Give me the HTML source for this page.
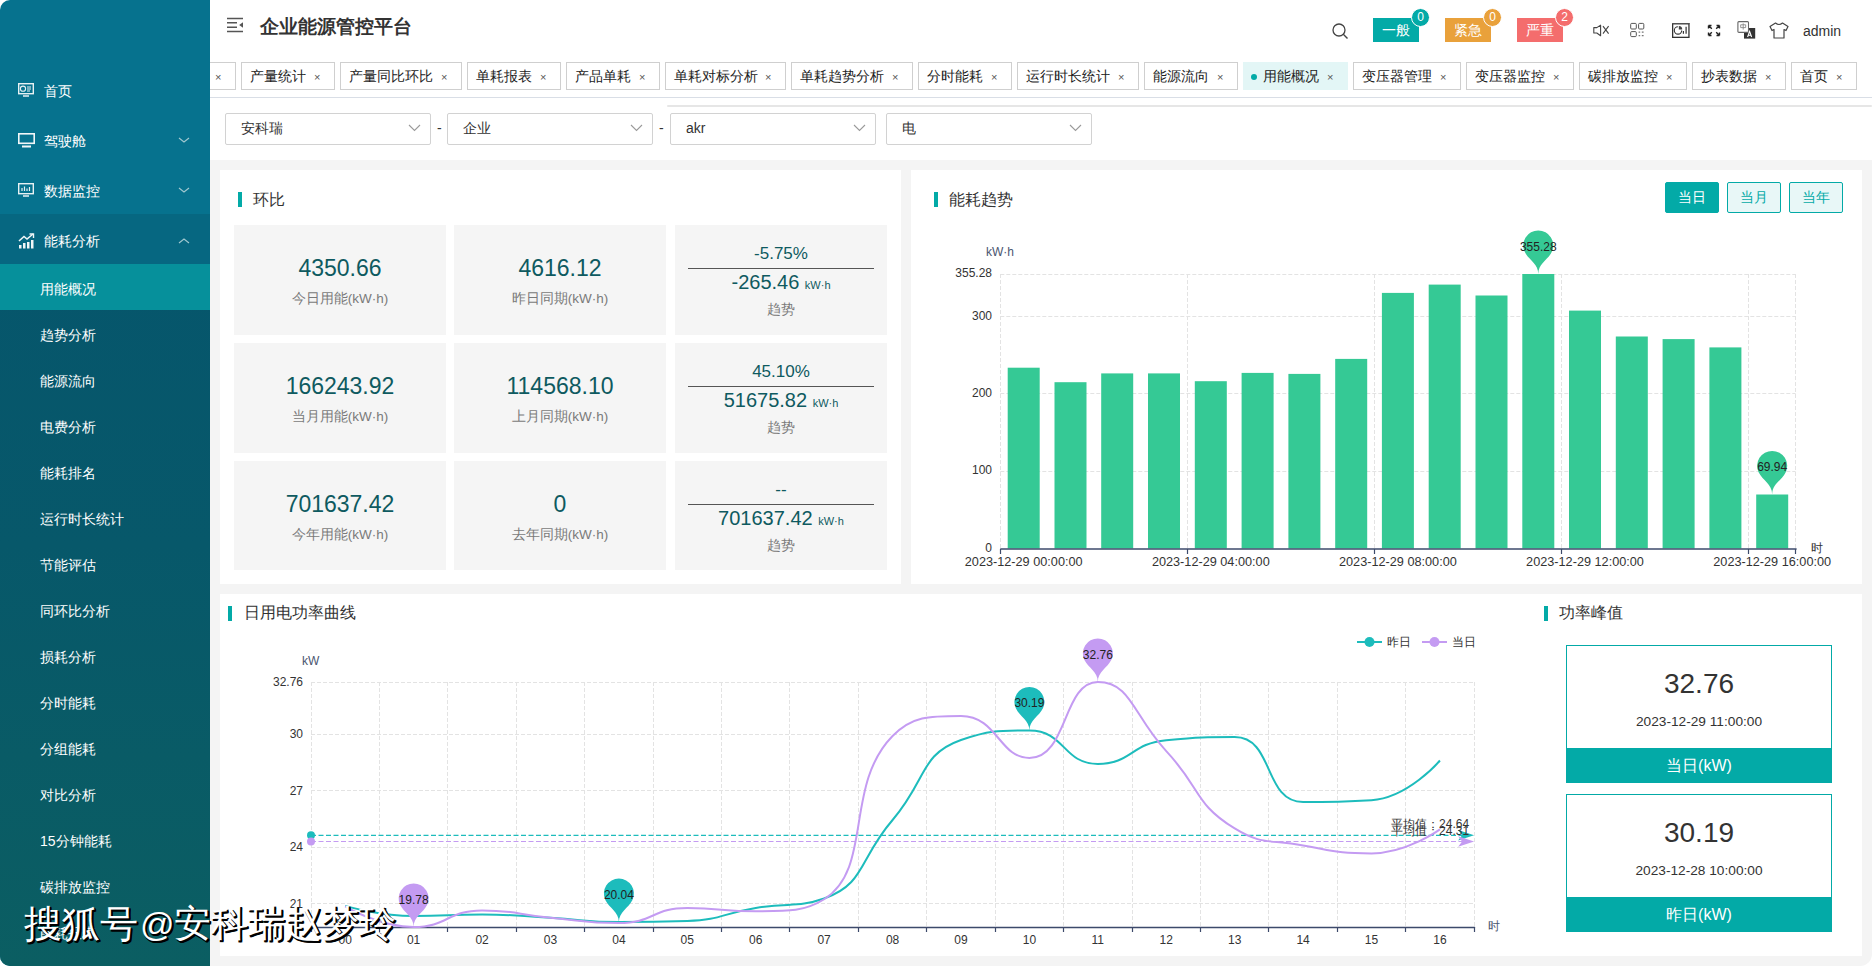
<!DOCTYPE html><html><head><meta charset="utf-8"><title>企业能源管控平台</title><style>
*{margin:0;padding:0;box-sizing:border-box}
html,body{width:1872px;height:966px;overflow:hidden;background:#fff;font-family:"Liberation Sans", sans-serif;color:#333}
.abs{position:absolute}
#side{position:absolute;left:0;top:0;width:210px;height:966px;background:#06728e;border-top-left-radius:10px;border-bottom-left-radius:10px;overflow:hidden}
.mi{position:absolute;left:0;width:210px;height:50px;color:#fff;font-size:14px;line-height:50px}
.mi .t{position:absolute;left:44px;top:2px}
.sub{position:absolute;left:0;top:264px;width:210px;height:702px;background:linear-gradient(180deg,#06566c 0%,#07586a 40%,#0b5e62 100%)}
.si{position:absolute;left:0;width:210px;height:46px;line-height:46px;color:#fff;font-size:14px}
.si .t{position:absolute;left:40px;top:2px}
#main{position:absolute;left:210px;top:0;width:1662px;height:966px;background:#f4f4f4;border-top-right-radius:10px;border-bottom-right-radius:10px;overflow:hidden}
.tab{position:absolute;top:62px;height:28px;border:1px solid #cfcfcf;background:#fff;font-size:14px;line-height:26px;color:#222;white-space:nowrap}
.tab .x{position:absolute;top:1px;font-size:11px;color:#555}
.sel{position:absolute;top:113px;height:32px;width:206px;border:1px solid #d2d2d2;border-radius:2px;background:#fff;font-size:14px;line-height:29px;color:#333}
.card{position:absolute;background:#fff}
.ct{position:absolute;font-size:16px;color:#333;line-height:20px;white-space:nowrap}
.bar4{position:absolute;width:4px;height:15px;background:#03aaa7}
.box{position:absolute;width:212px;height:109px;background:#f5f5f5;text-align:center}
.num{position:absolute;left:0;width:100%;font-size:23px;color:#0e5a60;line-height:28px;white-space:nowrap}
.lbl{position:absolute;left:0;width:100%;font-size:13.5px;color:#7a7a7a;line-height:18px;white-space:nowrap}
</style></head><body>
<div id="side">
<div class="abs" style="left:0;top:214px;width:210px;height:50px;background:#066781"></div>
<div class="sub"></div>
<div class="abs" style="left:0;top:264px;width:210px;height:46px;background:#06909b"></div>
<div class="mi" style="top:64px"><span class="t">首页</span>
</div>
<div class="mi" style="top:114px"><span class="t">驾驶舱</span>
<svg class="abs" style="left:178px;top:23px" width="12" height="7" viewBox="0 0 12 7"><path d="M1 1 L6 5 L11 1" fill="none" stroke="#9fc7cf" stroke-width="1.2"/></svg>
</div>
<div class="mi" style="top:164px"><span class="t">数据监控</span>
<svg class="abs" style="left:178px;top:23px" width="12" height="7" viewBox="0 0 12 7"><path d="M1 1 L6 5 L11 1" fill="none" stroke="#9fc7cf" stroke-width="1.2"/></svg>
</div>
<div class="mi" style="top:214px"><span class="t">能耗分析</span>
<svg class="abs" style="left:178px;top:24px" width="12" height="7" viewBox="0 0 12 7"><path d="M1 5 L6 1 L11 5" fill="none" stroke="#9fc7cf" stroke-width="1.2"/></svg>
</div>
<svg class="abs" style="left:18px;top:83px" width="16" height="15" viewBox="0 0 16 15"><rect x="0.7" y="0.7" width="14.6" height="10" fill="none" stroke="#e8f1f3" stroke-width="1.4"/><circle cx="5" cy="5.7" r="2.6" fill="none" stroke="#e8f1f3" stroke-width="1.1"/><path d="M9 4h4M9 6h4M9 8h3" stroke="#e8f1f3" stroke-width="1.1"/><path d="M5 13h6" stroke="#e8f1f3" stroke-width="1.6"/></svg>
<svg class="abs" style="left:18px;top:133px" width="17" height="15" viewBox="0 0 17 15"><rect x="0.8" y="0.8" width="15.4" height="9.5" fill="none" stroke="#f2f7f8" stroke-width="1.6"/><path d="M4 13.5h9" stroke="#f2f7f8" stroke-width="1.8"/></svg>
<svg class="abs" style="left:18px;top:183px" width="16" height="15" viewBox="0 0 16 15"><rect x="0.7" y="0.7" width="14.6" height="10" fill="none" stroke="#e8f1f3" stroke-width="1.4"/><path d="M4 8V5M6.5 8V3.5M9 8V5.5M11.5 8V4" stroke="#e8f1f3" stroke-width="1.2"/><path d="M5 13h6" stroke="#e8f1f3" stroke-width="1.6"/></svg>
<svg class="abs" style="left:18px;top:233px" width="17" height="16" viewBox="0 0 17 16"><path d="M1 8 L6 3.5 L9 6 L15 1" fill="none" stroke="#f0f6f7" stroke-width="1.6"/><path d="M11.5 1h4v4" fill="none" stroke="#f0f6f7" stroke-width="1.4"/><rect x="1" y="12" width="2.5" height="3.5" fill="#f0f6f7"/><rect x="5" y="10" width="2.5" height="5.5" fill="#f0f6f7"/><rect x="9" y="9" width="2.5" height="6.5" fill="#f0f6f7"/><rect x="13" y="7" width="2.5" height="8.5" fill="#f0f6f7"/></svg>
<div class="si" style="top:264px"><span class="t">用能概况</span></div>
<div class="si" style="top:310px"><span class="t">趋势分析</span></div>
<div class="si" style="top:356px"><span class="t">能源流向</span></div>
<div class="si" style="top:402px"><span class="t">电费分析</span></div>
<div class="si" style="top:448px"><span class="t">能耗排名</span></div>
<div class="si" style="top:494px"><span class="t">运行时长统计</span></div>
<div class="si" style="top:540px"><span class="t">节能评估</span></div>
<div class="si" style="top:586px"><span class="t">同环比分析</span></div>
<div class="si" style="top:632px"><span class="t">损耗分析</span></div>
<div class="si" style="top:678px"><span class="t">分时能耗</span></div>
<div class="si" style="top:724px"><span class="t">分组能耗</span></div>
<div class="si" style="top:770px"><span class="t">对比分析</span></div>
<div class="si" style="top:816px"><span class="t">15分钟能耗</span></div>
<div class="si" style="top:862px"><span class="t">碳排放监控</span></div>
<div class="si" style="top:908px"><span class="t">能耗报表</span></div>
</div>
<div class="abs" style="left:210px;top:100px;width:1662px;height:866px;background:#f4f4f4;border-bottom-right-radius:12px"></div>
<div class="abs" style="left:210px;top:0;width:1662px;height:160px;background:#fff;border-top-right-radius:10px"></div>
<svg class="abs" style="left:226px;top:17px" width="18" height="16" viewBox="0 0 18 16"><path d="M1 1.5h16M1 5.8h10M1 10.2h10M1 14.5h16" stroke="#555" stroke-width="1.4"/><path d="M17 5.2 L13.2 8 L17 10.8Z" fill="#555"/></svg>
<div class="abs" style="left:260px;top:15px;font-size:18.5px;font-weight:bold;color:#333;line-height:24px;letter-spacing:0;white-space:nowrap">企业能源管控平台</div>
<svg class="abs" style="left:1332px;top:23px" width="17" height="17" viewBox="0 0 17 17"><circle cx="7" cy="7" r="6" fill="none" stroke="#444" stroke-width="1.3"/><path d="M11.3 11.3 L15.5 15.5" stroke="#444" stroke-width="1.4"/></svg>
<div class="abs" style="left:1373px;top:18px;width:46px;height:24px;background:#03aaa7;color:#fff;font-size:14px;line-height:25px;text-align:center">一般</div>
<div class="abs" style="left:1411px;top:8px;width:19px;height:19px;border-radius:50%;background:#03aaa7;border:1.2px solid #fff;color:#fff;font-size:12px;line-height:17px;text-align:center">0</div>
<div class="abs" style="left:1445px;top:18px;width:46px;height:24px;background:#e9a13b;color:#fff;font-size:14px;line-height:25px;text-align:center">紧急</div>
<div class="abs" style="left:1483px;top:8px;width:19px;height:19px;border-radius:50%;background:#e9a13b;border:1.2px solid #fff;color:#fff;font-size:12px;line-height:17px;text-align:center">0</div>
<div class="abs" style="left:1517px;top:18px;width:46px;height:24px;background:#f46d6d;color:#fff;font-size:14px;line-height:25px;text-align:center">严重</div>
<div class="abs" style="left:1555px;top:8px;width:19px;height:19px;border-radius:50%;background:#f46d6d;border:1.2px solid #fff;color:#fff;font-size:12px;line-height:17px;text-align:center">2</div>
<svg class="abs" style="left:1592px;top:24px" width="18" height="13" viewBox="0 0 18 13"><path d="M1.8 3.6h3L8.6 1.2v10.6L4.8 9H1.8Z" fill="none" stroke="#444" stroke-width="1.1" stroke-linejoin="round"/><path d="M11 2.2L16.6 9.6M16.6 2.2L11 9.6" stroke="#444" stroke-width="1.1"/></svg>
<svg class="abs" style="left:1629px;top:22px" width="16" height="16" viewBox="0 0 16 16"><rect x="1.7" y="1.4" width="5.6" height="5.6" rx="1" fill="none" stroke="#555" stroke-width="1"/><rect x="9.6" y="1.4" width="5.2" height="5.6" rx="1" fill="none" stroke="#555" stroke-width="1"/><rect x="1.7" y="9.6" width="5.6" height="5" rx="1" fill="none" stroke="#555" stroke-width="1"/><path d="M9.6 10.2h1.6M12.8 10.2h1.8M9.6 13.6h1.6M12.8 13.6h1.8" stroke="#777" stroke-width="1.3"/></svg>
<svg class="abs" style="left:1671px;top:22px" width="19" height="16" viewBox="0 0 19 16"><rect x="1.65" y="1.75" width="16.3" height="13.6" fill="none" stroke="#333" stroke-width="1.3"/><path d="M1 1.6h17.6" stroke="#555" stroke-width="1"/><path d="M6.9 4.7 A3.7 3.7 0 1 0 10.7 8.4" fill="none" stroke="#333" stroke-width="1.1"/><path d="M7.8 4 V7.6 H11.2 A3.4 3.4 0 0 0 7.8 4Z" fill="#444"/><path d="M12.4 11.8V8.9M15.1 11.8V4.8" stroke="#333" stroke-width="1.2"/></svg>
<svg class="abs" style="left:1707px;top:24px" width="14" height="13" viewBox="0 0 14 13"><path d="M1.5 1.5L4.8 4.8M1.5 1.5h3M1.5 1.5v3M12.5 1.5L9.2 4.8M12.5 1.5h-3M12.5 1.5v3M1.5 11.5L4.8 8.2M1.5 11.5h3M1.5 11.5v-3M12.5 11.5L9.2 8.2M12.5 11.5h-3M12.5 11.5v-3" stroke="#222" stroke-width="1.4"/></svg>
<svg class="abs" style="left:1736px;top:20px" width="21" height="20" viewBox="0 0 21 20"><rect x="8" y="8" width="11.2" height="10.6" fill="#333"/><rect x="1.9" y="1.6" width="10.6" height="10.8" rx="1" fill="#fff" stroke="#666" stroke-width="1.1"/><path d="M7.2 3.4v6.2M4.7 4.8h5v2.8h-5Z" fill="none" stroke="#888" stroke-width="0.9"/><path d="M11.6 17L13.6 11.3L15.6 17M12.3 15.2h2.6" fill="none" stroke="#fff" stroke-width="1.1"/></svg>
<svg class="abs" style="left:1769px;top:22px" width="20" height="17" viewBox="0 0 20 17"><path d="M6.5 1 L1 4.5 L3 8.5 L5 7.5 V16 H15 V7.5 L17 8.5 L19 4.5 L13.5 1 Q10 4 6.5 1Z" fill="none" stroke="#444" stroke-width="1.2" stroke-linejoin="round"/></svg>
<div class="abs" style="left:1803px;top:22px;font-size:14px;line-height:18px;color:#333">admin</div>
<div class="abs" style="left:210px;top:0;width:1662px;height:100px;overflow:hidden">
<div class="tab" style="left:-60px;width:86px;">
<span class="abs" style="left:8px;top:0"></span>
<span class="x" style="left:64px">×</span>
</div>
<div class="tab" style="left:31px;width:94px;">
<span class="abs" style="left:8px;top:0">产量统计</span>
<span class="x" style="left:72px">×</span>
</div>
<div class="tab" style="left:130px;width:122px;">
<span class="abs" style="left:8px;top:0">产量同比环比</span>
<span class="x" style="left:100px">×</span>
</div>
<div class="tab" style="left:257px;width:94px;">
<span class="abs" style="left:8px;top:0">单耗报表</span>
<span class="x" style="left:72px">×</span>
</div>
<div class="tab" style="left:356px;width:94px;">
<span class="abs" style="left:8px;top:0">产品单耗</span>
<span class="x" style="left:72px">×</span>
</div>
<div class="tab" style="left:455px;width:121px;">
<span class="abs" style="left:8px;top:0">单耗对标分析</span>
<span class="x" style="left:99px">×</span>
</div>
<div class="tab" style="left:581px;width:122px;">
<span class="abs" style="left:8px;top:0">单耗趋势分析</span>
<span class="x" style="left:100px">×</span>
</div>
<div class="tab" style="left:708px;width:94px;">
<span class="abs" style="left:8px;top:0">分时能耗</span>
<span class="x" style="left:72px">×</span>
</div>
<div class="tab" style="left:807px;width:122px;">
<span class="abs" style="left:8px;top:0">运行时长统计</span>
<span class="x" style="left:100px">×</span>
</div>
<div class="tab" style="left:934px;width:94px;">
<span class="abs" style="left:8px;top:0">能源流向</span>
<span class="x" style="left:72px">×</span>
</div>
<div class="tab" style="left:1033px;width:105px;background:#e3f6f6;border-color:#e3f6f6;">
<span class="abs" style="left:7px;top:11px;width:6px;height:6px;border-radius:50%;background:#03aaa7"></span>
<span class="abs" style="left:19px;top:0">用能概况</span>
<span class="x" style="left:83px">×</span>
</div>
<div class="tab" style="left:1143px;width:108px;">
<span class="abs" style="left:8px;top:0">变压器管理</span>
<span class="x" style="left:86px">×</span>
</div>
<div class="tab" style="left:1256px;width:108px;">
<span class="abs" style="left:8px;top:0">变压器监控</span>
<span class="x" style="left:86px">×</span>
</div>
<div class="tab" style="left:1369px;width:108px;">
<span class="abs" style="left:8px;top:0">碳排放监控</span>
<span class="x" style="left:86px">×</span>
</div>
<div class="tab" style="left:1482px;width:94px;">
<span class="abs" style="left:8px;top:0">抄表数据</span>
<span class="x" style="left:72px">×</span>
</div>
<div class="tab" style="left:1581px;width:66px;">
<span class="abs" style="left:8px;top:0">首页</span>
<span class="x" style="left:44px">×</span>
</div>
</div>
<div class="abs" style="left:210px;top:97px;width:1662px;height:1px;background:#d9dee6"></div>
<div class="abs" style="left:667px;top:105px;width:1205px;height:2px;background:#e6e6e6;border-radius:1px"></div>
<div class="sel" style="left:225px"><span class="abs" style="left:15px;top:0">安科瑞</span><svg class="abs" style="left:182px;top:10px" width="13" height="8" viewBox="0 0 13 8"><path d="M1 1L6.5 6.5L12 1" fill="none" stroke="#9a9a9a" stroke-width="1.1"/></svg></div>
<div class="sel" style="left:447px"><span class="abs" style="left:15px;top:0">企业</span><svg class="abs" style="left:182px;top:10px" width="13" height="8" viewBox="0 0 13 8"><path d="M1 1L6.5 6.5L12 1" fill="none" stroke="#9a9a9a" stroke-width="1.1"/></svg></div>
<div class="sel" style="left:670px"><span class="abs" style="left:15px;top:0">akr</span><svg class="abs" style="left:182px;top:10px" width="13" height="8" viewBox="0 0 13 8"><path d="M1 1L6.5 6.5L12 1" fill="none" stroke="#9a9a9a" stroke-width="1.1"/></svg></div>
<div class="sel" style="left:886px"><span class="abs" style="left:15px;top:0">电</span><svg class="abs" style="left:182px;top:10px" width="13" height="8" viewBox="0 0 13 8"><path d="M1 1L6.5 6.5L12 1" fill="none" stroke="#9a9a9a" stroke-width="1.1"/></svg></div>
<div class="abs" style="left:437px;top:119px;font-size:14px;color:#333;line-height:18px">-</div>
<div class="abs" style="left:659px;top:119px;font-size:14px;color:#333;line-height:18px">-</div>
<div class="card" style="left:220px;top:170px;width:681px;height:414px"></div>
<div class="bar4" style="left:238px;top:192px"></div><div class="ct" style="left:253px;top:190px">环比</div>
<div class="box" style="left:234px;top:225px;height:110px">
<div class="num" style="top:29px">4350.66</div><div class="lbl" style="top:65px">今日用能(kW·h)</div>
</div>
<div class="box" style="left:454px;top:225px;height:110px">
<div class="num" style="top:29px">4616.12</div><div class="lbl" style="top:65px">昨日同期(kW·h)</div>
</div>
<div class="box" style="left:675px;top:225px;height:110px">
<div class="num" style="top:17.5px;font-size:17px;line-height:22px">-5.75%</div>
<div class="abs" style="left:13px;top:43px;width:186px;height:1px;background:#555"></div>
<div class="num" style="top:45px;font-size:20px;line-height:24px">-265.46 <span style="font-size:11px">kW·h</span></div>
<div class="lbl" style="top:76px">趋势</div>
</div>
<div class="box" style="left:234px;top:343px;height:110px">
<div class="num" style="top:29px">166243.92</div><div class="lbl" style="top:65px">当月用能(kW·h)</div>
</div>
<div class="box" style="left:454px;top:343px;height:110px">
<div class="num" style="top:29px">114568.10</div><div class="lbl" style="top:65px">上月同期(kW·h)</div>
</div>
<div class="box" style="left:675px;top:343px;height:110px">
<div class="num" style="top:17.5px;font-size:17px;line-height:22px">45.10%</div>
<div class="abs" style="left:13px;top:43px;width:186px;height:1px;background:#555"></div>
<div class="num" style="top:45px;font-size:20px;line-height:24px">51675.82 <span style="font-size:11px">kW·h</span></div>
<div class="lbl" style="top:76px">趋势</div>
</div>
<div class="box" style="left:234px;top:461px;height:109px">
<div class="num" style="top:29px">701637.42</div><div class="lbl" style="top:65px">今年用能(kW·h)</div>
</div>
<div class="box" style="left:454px;top:461px;height:109px">
<div class="num" style="top:29px">0</div><div class="lbl" style="top:65px">去年同期(kW·h)</div>
</div>
<div class="box" style="left:675px;top:461px;height:109px">
<div class="num" style="top:17.5px;font-size:17px;line-height:22px">--</div>
<div class="abs" style="left:13px;top:43px;width:186px;height:1px;background:#555"></div>
<div class="num" style="top:45px;font-size:20px;line-height:24px">701637.42 <span style="font-size:11px">kW·h</span></div>
<div class="lbl" style="top:76px">趋势</div>
</div>
<div class="card" style="left:911px;top:170px;width:951px;height:414px"></div>
<div class="bar4" style="left:934px;top:192px"></div><div class="ct" style="left:949px;top:190px">能耗趋势</div>
<div class="abs" style="left:1665px;top:182px;width:54px;height:31px;background:#03aaa7;color:#fff;border:1px solid #03aaa7;font-size:14px;line-height:29px;text-align:center;border-radius:2px">当日</div>
<div class="abs" style="left:1727px;top:182px;width:54px;height:31px;background:#e8f7f7;color:#03aaa7;border:1px solid #03aaa7;font-size:14px;line-height:29px;text-align:center;border-radius:2px">当月</div>
<div class="abs" style="left:1789px;top:182px;width:54px;height:31px;background:#e8f7f7;color:#03aaa7;border:1px solid #03aaa7;font-size:14px;line-height:29px;text-align:center;border-radius:2px">当年</div>
<svg class="abs" style="left:0;top:0" width="1872" height="966" viewBox="0 0 1872 966">
<path d="M1000.3 471.5H1795.6" stroke="#e3e3e3" stroke-dasharray="4 2" stroke-width="1"/>
<path d="M1000.3 393.5H1795.6" stroke="#e3e3e3" stroke-dasharray="4 2" stroke-width="1"/>
<path d="M1000.3 316.5H1795.6" stroke="#e3e3e3" stroke-dasharray="4 2" stroke-width="1"/>
<path d="M1000.3 274.5H1795.6" stroke="#e3e3e3" stroke-dasharray="4 2" stroke-width="1"/>
<path d="M1000.5 274.0V548.5" stroke="#e3e3e3" stroke-dasharray="4 2" stroke-width="1"/>
<path d="M1187.5 274.0V548.5" stroke="#e3e3e3" stroke-dasharray="4 2" stroke-width="1"/>
<path d="M1374.5 274.0V548.5" stroke="#e3e3e3" stroke-dasharray="4 2" stroke-width="1"/>
<path d="M1561.5 274.0V548.5" stroke="#e3e3e3" stroke-dasharray="4 2" stroke-width="1"/>
<path d="M1748.5 274.0V548.5" stroke="#e3e3e3" stroke-dasharray="4 2" stroke-width="1"/>
<path d="M1795.5 274.0V548.5" stroke="#e3e3e3" stroke-dasharray="4 2" stroke-width="1"/>
<rect x="1007.7" y="367.7" width="32" height="180.8" fill="#35c995"/>
<rect x="1054.5" y="382.2" width="32" height="166.3" fill="#35c995"/>
<rect x="1101.2" y="373.4" width="32" height="175.1" fill="#35c995"/>
<rect x="1148.0" y="373.4" width="32" height="175.1" fill="#35c995"/>
<rect x="1194.8" y="381.2" width="32" height="167.3" fill="#35c995"/>
<rect x="1241.6" y="372.9" width="32" height="175.6" fill="#35c995"/>
<rect x="1288.4" y="373.9" width="32" height="174.6" fill="#35c995"/>
<rect x="1335.2" y="358.9" width="32" height="189.6" fill="#35c995"/>
<rect x="1381.9" y="292.9" width="32" height="255.6" fill="#35c995"/>
<rect x="1428.7" y="284.6" width="32" height="263.9" fill="#35c995"/>
<rect x="1475.5" y="295.5" width="32" height="253.0" fill="#35c995"/>
<rect x="1522.3" y="274.0" width="32" height="274.5" fill="#35c995"/>
<rect x="1569.0" y="310.6" width="32" height="237.9" fill="#35c995"/>
<rect x="1615.8" y="336.5" width="32" height="212.0" fill="#35c995"/>
<rect x="1662.6" y="339.1" width="32" height="209.4" fill="#35c995"/>
<rect x="1709.4" y="347.4" width="32" height="201.1" fill="#35c995"/>
<rect x="1756.2" y="494.5" width="32" height="54.0" fill="#35c995"/>
<path d="M1000.3 549H1796.6" stroke="#3c4a6b" stroke-width="1.3"/>
<path d="M1000.5 549V554" stroke="#3c4a6b" stroke-width="1.2"/>
<path d="M1187.5 549V554" stroke="#3c4a6b" stroke-width="1.2"/>
<path d="M1374.5 549V554" stroke="#3c4a6b" stroke-width="1.2"/>
<path d="M1561.5 549V554" stroke="#3c4a6b" stroke-width="1.2"/>
<path d="M1748.5 549V554" stroke="#3c4a6b" stroke-width="1.2"/>
<path d="M1795.5 549V554" stroke="#3c4a6b" stroke-width="1.2"/>
<text x="992" y="551.5" text-anchor="end" font-size="12" fill="#333" font-family="Liberation Sans, sans-serif">0</text>
<text x="992" y="474.2" text-anchor="end" font-size="12" fill="#333" font-family="Liberation Sans, sans-serif">100</text>
<text x="992" y="397.0" text-anchor="end" font-size="12" fill="#333" font-family="Liberation Sans, sans-serif">200</text>
<text x="992" y="319.7" text-anchor="end" font-size="12" fill="#333" font-family="Liberation Sans, sans-serif">300</text>
<text x="992" y="277.0" text-anchor="end" font-size="12" fill="#333" font-family="Liberation Sans, sans-serif">355.28</text>
<text x="986" y="256" font-size="12" fill="#4a5670" font-family="Liberation Sans, sans-serif">kW·h</text>
<text x="1811" y="552" font-size="12" fill="#333" font-family="Liberation Sans, sans-serif">时</text>
<text x="1023.7" y="566" text-anchor="middle" font-size="12.7" fill="#333" font-family="Liberation Sans, sans-serif">2023-12-29 00:00:00</text>
<text x="1210.8" y="566" text-anchor="middle" font-size="12.7" fill="#333" font-family="Liberation Sans, sans-serif">2023-12-29 04:00:00</text>
<text x="1397.9" y="566" text-anchor="middle" font-size="12.7" fill="#333" font-family="Liberation Sans, sans-serif">2023-12-29 08:00:00</text>
<text x="1585.0" y="566" text-anchor="middle" font-size="12.7" fill="#333" font-family="Liberation Sans, sans-serif">2023-12-29 12:00:00</text>
<text x="1772.2" y="566" text-anchor="middle" font-size="12.7" fill="#333" font-family="Liberation Sans, sans-serif">2023-12-29 16:00:00</text>
</svg>
<div class="card" style="left:220px;top:594px;width:1642px;height:362px"></div>
<div class="bar4" style="left:228px;top:606px"></div><div class="ct" style="left:244px;top:603px">日用电功率曲线</div>
<div class="bar4" style="left:1544px;top:606px"></div><div class="ct" style="left:1559px;top:603px">功率峰值</div>
<svg class="abs" style="left:0;top:0" width="1872" height="600" viewBox="0 0 1872 600"><path d="M1524.72 251.86 A15.0 15.0 0 1 1 1551.82 251.86 C1547.97 259.99 1538.27 263.50 1538.27 274.00 C1538.27 263.50 1528.57 259.99 1524.72 251.86Z" fill="#35c995"/><text x="1538.3" y="250.7" text-anchor="middle" font-size="12" fill="#222" font-family="Liberation Sans, sans-serif">355.28</text><path d="M1758.62 472.32 A15.0 15.0 0 1 1 1785.72 472.32 C1781.87 480.45 1772.17 483.96 1772.17 494.46 C1772.17 483.96 1762.47 480.45 1758.62 472.32Z" fill="#35c995"/><text x="1772.2" y="471.2" text-anchor="middle" font-size="12" fill="#222" font-family="Liberation Sans, sans-serif">69.94</text></svg>
<svg class="abs" style="left:0;top:0" width="1872" height="966" viewBox="0 0 1872 966">
<path d="M311.0 903.5H1474.1" stroke="#e3e3e3" stroke-dasharray="4 2"/>
<path d="M311.0 847.5H1474.1" stroke="#e3e3e3" stroke-dasharray="4 2"/>
<path d="M311.0 790.5H1474.1" stroke="#e3e3e3" stroke-dasharray="4 2"/>
<path d="M311.0 734.5H1474.1" stroke="#e3e3e3" stroke-dasharray="4 2"/>
<path d="M311.0 682.5H1474.1" stroke="#e3e3e3" stroke-dasharray="4 2"/>
<path d="M311.5 682.0V927.0" stroke="#e3e3e3" stroke-dasharray="4 2"/>
<path d="M379.5 682.0V927.0" stroke="#e3e3e3" stroke-dasharray="4 2"/>
<path d="M447.5 682.0V927.0" stroke="#e3e3e3" stroke-dasharray="4 2"/>
<path d="M516.5 682.0V927.0" stroke="#e3e3e3" stroke-dasharray="4 2"/>
<path d="M584.5 682.0V927.0" stroke="#e3e3e3" stroke-dasharray="4 2"/>
<path d="M653.5 682.0V927.0" stroke="#e3e3e3" stroke-dasharray="4 2"/>
<path d="M721.5 682.0V927.0" stroke="#e3e3e3" stroke-dasharray="4 2"/>
<path d="M789.5 682.0V927.0" stroke="#e3e3e3" stroke-dasharray="4 2"/>
<path d="M858.5 682.0V927.0" stroke="#e3e3e3" stroke-dasharray="4 2"/>
<path d="M926.5 682.0V927.0" stroke="#e3e3e3" stroke-dasharray="4 2"/>
<path d="M995.5 682.0V927.0" stroke="#e3e3e3" stroke-dasharray="4 2"/>
<path d="M1063.5 682.0V927.0" stroke="#e3e3e3" stroke-dasharray="4 2"/>
<path d="M1132.5 682.0V927.0" stroke="#e3e3e3" stroke-dasharray="4 2"/>
<path d="M1200.5 682.0V927.0" stroke="#e3e3e3" stroke-dasharray="4 2"/>
<path d="M1268.5 682.0V927.0" stroke="#e3e3e3" stroke-dasharray="4 2"/>
<path d="M1337.5 682.0V927.0" stroke="#e3e3e3" stroke-dasharray="4 2"/>
<path d="M1405.5 682.0V927.0" stroke="#e3e3e3" stroke-dasharray="4 2"/>
<path d="M1474.5 682.0V927.0" stroke="#e3e3e3" stroke-dasharray="4 2"/>
<path d="M311.0 927.5H1475.1" stroke="#3c4a6b" stroke-width="1.3"/>
<path d="M311.5 927.0V932.0" stroke="#3c4a6b" stroke-width="1.2"/>
<path d="M379.5 927.0V932.0" stroke="#3c4a6b" stroke-width="1.2"/>
<path d="M447.5 927.0V932.0" stroke="#3c4a6b" stroke-width="1.2"/>
<path d="M516.5 927.0V932.0" stroke="#3c4a6b" stroke-width="1.2"/>
<path d="M584.5 927.0V932.0" stroke="#3c4a6b" stroke-width="1.2"/>
<path d="M653.5 927.0V932.0" stroke="#3c4a6b" stroke-width="1.2"/>
<path d="M721.5 927.0V932.0" stroke="#3c4a6b" stroke-width="1.2"/>
<path d="M789.5 927.0V932.0" stroke="#3c4a6b" stroke-width="1.2"/>
<path d="M858.5 927.0V932.0" stroke="#3c4a6b" stroke-width="1.2"/>
<path d="M926.5 927.0V932.0" stroke="#3c4a6b" stroke-width="1.2"/>
<path d="M995.5 927.0V932.0" stroke="#3c4a6b" stroke-width="1.2"/>
<path d="M1063.5 927.0V932.0" stroke="#3c4a6b" stroke-width="1.2"/>
<path d="M1132.5 927.0V932.0" stroke="#3c4a6b" stroke-width="1.2"/>
<path d="M1200.5 927.0V932.0" stroke="#3c4a6b" stroke-width="1.2"/>
<path d="M1268.5 927.0V932.0" stroke="#3c4a6b" stroke-width="1.2"/>
<path d="M1337.5 927.0V932.0" stroke="#3c4a6b" stroke-width="1.2"/>
<path d="M1405.5 927.0V932.0" stroke="#3c4a6b" stroke-width="1.2"/>
<path d="M1474.5 927.0V932.0" stroke="#3c4a6b" stroke-width="1.2"/>
<text x="303" y="907.8" text-anchor="end" font-size="12" fill="#333" font-family="Liberation Sans, sans-serif">21</text>
<text x="303" y="851.1" text-anchor="end" font-size="12" fill="#333" font-family="Liberation Sans, sans-serif">24</text>
<text x="303" y="794.5" text-anchor="end" font-size="12" fill="#333" font-family="Liberation Sans, sans-serif">27</text>
<text x="303" y="737.9" text-anchor="end" font-size="12" fill="#333" font-family="Liberation Sans, sans-serif">30</text>
<text x="303" y="685.8" text-anchor="end" font-size="12" fill="#333" font-family="Liberation Sans, sans-serif">32.76</text>
<text x="302" y="665" font-size="12" fill="#4a5670" font-family="Liberation Sans, sans-serif">kW</text>
<text x="1488" y="930" font-size="12" fill="#4a5670" font-family="Liberation Sans, sans-serif">时</text>
<text x="345.2" y="944" text-anchor="middle" font-size="12" fill="#333" font-family="Liberation Sans, sans-serif">00</text>
<text x="413.6" y="944" text-anchor="middle" font-size="12" fill="#333" font-family="Liberation Sans, sans-serif">01</text>
<text x="482.1" y="944" text-anchor="middle" font-size="12" fill="#333" font-family="Liberation Sans, sans-serif">02</text>
<text x="550.5" y="944" text-anchor="middle" font-size="12" fill="#333" font-family="Liberation Sans, sans-serif">03</text>
<text x="618.9" y="944" text-anchor="middle" font-size="12" fill="#333" font-family="Liberation Sans, sans-serif">04</text>
<text x="687.3" y="944" text-anchor="middle" font-size="12" fill="#333" font-family="Liberation Sans, sans-serif">05</text>
<text x="755.7" y="944" text-anchor="middle" font-size="12" fill="#333" font-family="Liberation Sans, sans-serif">06</text>
<text x="824.1" y="944" text-anchor="middle" font-size="12" fill="#333" font-family="Liberation Sans, sans-serif">07</text>
<text x="892.6" y="944" text-anchor="middle" font-size="12" fill="#333" font-family="Liberation Sans, sans-serif">08</text>
<text x="961.0" y="944" text-anchor="middle" font-size="12" fill="#333" font-family="Liberation Sans, sans-serif">09</text>
<text x="1029.4" y="944" text-anchor="middle" font-size="12" fill="#333" font-family="Liberation Sans, sans-serif">10</text>
<text x="1097.8" y="944" text-anchor="middle" font-size="12" fill="#333" font-family="Liberation Sans, sans-serif">11</text>
<text x="1166.2" y="944" text-anchor="middle" font-size="12" fill="#333" font-family="Liberation Sans, sans-serif">12</text>
<text x="1234.7" y="944" text-anchor="middle" font-size="12" fill="#333" font-family="Liberation Sans, sans-serif">13</text>
<text x="1303.1" y="944" text-anchor="middle" font-size="12" fill="#333" font-family="Liberation Sans, sans-serif">14</text>
<text x="1371.5" y="944" text-anchor="middle" font-size="12" fill="#333" font-family="Liberation Sans, sans-serif">15</text>
<text x="1439.9" y="944" text-anchor="middle" font-size="12" fill="#333" font-family="Liberation Sans, sans-serif">16</text>
<path d="M311.0 835.3H1470.1" stroke="#1dbcbc" stroke-dasharray="5 2.5" stroke-width="1.2"/>
<circle cx="311.0" cy="835.3" r="4" fill="#1dbcbc"/>
<path d="M1474.1 835.3 L1458.1 829.9 L1462.1 835.3 L1458.1 840.6Z" fill="#1dbcbc"/>
<text x="1469.1" y="828.3" text-anchor="end" font-size="12" fill="#333" font-family="Liberation Sans, sans-serif">平均值：24.64</text>
<path d="M311.0 841.5H1470.1" stroke="#c49bf2" stroke-dasharray="5 2.5" stroke-width="1.2"/>
<circle cx="311.0" cy="841.5" r="4" fill="#c49bf2"/>
<path d="M1474.1 841.5 L1458.1 836.2 L1462.1 841.5 L1458.1 846.8Z" fill="#c49bf2"/>
<text x="1469.1" y="834.5" text-anchor="end" font-size="12" fill="#333" font-family="Liberation Sans, sans-serif">平均值：24.31</text>
<path d="M345.21 905.86 C345.21 905.86 379.24 916.05 413.63 916.05 C447.66 916.05 447.85 914.54 482.05 914.54 C516.27 914.54 516.28 915.86 550.47 917.75 C584.70 919.64 584.65 922.09 618.89 922.09 C653.07 922.09 653.40 922.09 687.31 920.96 C721.82 919.81 721.38 913.57 755.73 907.94 C789.80 902.34 796.87 907.94 824.15 898.50 C865.29 884.27 858.55 859.40 892.57 819.98 C926.97 780.12 919.67 754.33 960.99 739.95 C988.09 730.51 996.87 730.51 1029.41 730.51 C1065.29 730.51 1062.77 763.92 1097.83 763.92 C1131.19 763.92 1131.08 743.33 1166.25 740.14 C1199.50 737.12 1205.89 737.12 1234.67 737.12 C1274.31 737.12 1263.44 802.05 1303.09 802.05 C1331.86 802.05 1339.76 802.05 1371.51 800.16 C1408.18 797.98 1439.93 760.52 1439.93 760.52" fill="none" stroke="#1dbcbc" stroke-width="2"/>
<path d="M345.21 906.43 C345.21 906.43 379.17 927.00 413.63 927.00 C447.59 927.00 447.45 910.39 482.05 910.39 C515.87 910.39 516.21 914.59 550.47 917.75 C584.63 920.91 585.04 923.04 618.89 923.04 C653.46 923.04 652.71 907.94 687.31 907.94 C721.13 907.94 721.76 911.33 755.73 911.33 C790.18 911.33 804.87 911.33 824.15 899.25 C873.29 868.47 843.79 785.67 892.57 735.98 C912.21 715.98 928.82 715.98 960.99 715.98 C997.24 715.98 999.32 758.07 1029.41 758.07 C1067.74 758.07 1062.75 682.00 1097.83 682.00 C1131.17 682.00 1133.07 715.57 1166.25 751.08 C1201.49 788.81 1194.00 803.58 1234.67 828.47 C1262.42 845.46 1268.48 839.16 1303.09 845.46 C1336.90 851.62 1338.18 853.39 1371.51 853.39 C1406.60 853.39 1439.93 829.42 1439.93 829.42" fill="none" stroke="#c49bf2" stroke-width="2"/>
<path d="M1015.86 708.37 A15.0 15.0 0 1 1 1042.96 708.37 C1039.11 716.50 1029.41 720.01 1029.41 730.51 C1029.41 720.01 1019.71 716.50 1015.86 708.37Z" fill="#1dbcbc"/><text x="1029.4" y="707.2" text-anchor="middle" font-size="12" fill="#222" font-family="Liberation Sans, sans-serif">30.19</text>
<path d="M605.34 899.95 A15.0 15.0 0 1 1 632.44 899.95 C628.59 908.08 618.89 911.59 618.89 922.09 C618.89 911.59 609.19 908.08 605.34 899.95Z" fill="#1dbcbc"/><text x="618.9" y="898.8" text-anchor="middle" font-size="12" fill="#222" font-family="Liberation Sans, sans-serif">20.04</text>
<path d="M1084.28 659.86 A15.0 15.0 0 1 1 1111.38 659.86 C1107.53 667.99 1097.83 671.50 1097.83 682.00 C1097.83 671.50 1088.13 667.99 1084.28 659.86Z" fill="#c49bf2"/><text x="1097.8" y="658.7" text-anchor="middle" font-size="12" fill="#222" font-family="Liberation Sans, sans-serif">32.76</text>
<path d="M400.08 904.86 A15.0 15.0 0 1 1 427.18 904.86 C423.33 912.99 413.63 916.50 413.63 927.00 C413.63 916.50 403.93 912.99 400.08 904.86Z" fill="#c49bf2"/><text x="413.6" y="903.7" text-anchor="middle" font-size="12" fill="#222" font-family="Liberation Sans, sans-serif">19.78</text>
<path d="M1357 642H1382" stroke="#1dbcbc" stroke-width="2"/><circle cx="1369.5" cy="642" r="5" fill="#1dbcbc"/>
<text x="1387" y="646" font-size="12" fill="#333" font-family="Liberation Sans, sans-serif">昨日</text>
<path d="M1422 642H1447" stroke="#c49bf2" stroke-width="2"/><circle cx="1434.5" cy="642" r="5" fill="#c49bf2"/>
<text x="1452" y="646" font-size="12" fill="#333" font-family="Liberation Sans, sans-serif">当日</text>
</svg>
<div class="abs" style="left:1566px;top:645px;width:266px;height:138px;border:1px solid #03aaa7;background:#fff;text-align:center">
<div class="abs" style="left:0;top:19px;width:100%;font-size:28px;line-height:38px;color:#333">32.76</div>
<div class="abs" style="left:0;top:67px;width:100%;font-size:13.7px;line-height:18px;color:#333">2023-12-29 11:00:00</div>
<div class="abs" style="left:-1px;top:102px;width:266px;height:35px;background:#03aaa7;color:#fff;font-size:16px;line-height:35px">当日(kW)</div>
</div>
<div class="abs" style="left:1566px;top:794px;width:266px;height:138px;border:1px solid #03aaa7;background:#fff;text-align:center">
<div class="abs" style="left:0;top:19px;width:100%;font-size:28px;line-height:38px;color:#333">30.19</div>
<div class="abs" style="left:0;top:67px;width:100%;font-size:13.7px;line-height:18px;color:#333">2023-12-28 10:00:00</div>
<div class="abs" style="left:-1px;top:102px;width:266px;height:35px;background:#03aaa7;color:#fff;font-size:16px;line-height:35px">昨日(kW)</div>
</div>
<div style="font-weight:normal;color:#fff;white-space:nowrap;text-shadow:2px 2px 0 #000,1px 2px 0 #000,2px 1px 0 #000;position:absolute;line-height:48px;left:24px;top:900px;font-size:38px">搜狐号</div>
<div style="font-weight:normal;color:#fff;white-space:nowrap;text-shadow:2px 2px 0 #000,1px 2px 0 #000,2px 1px 0 #000;position:absolute;line-height:48px;left:140px;top:900px;font-size:34px">@</div>
<div style="font-weight:normal;color:#fff;white-space:nowrap;text-shadow:2px 2px 0 #000,1px 2px 0 #000,2px 1px 0 #000;position:absolute;line-height:48px;left:174px;top:900px;font-size:37px">安科瑞赵梦玲</div>
</body></html>
